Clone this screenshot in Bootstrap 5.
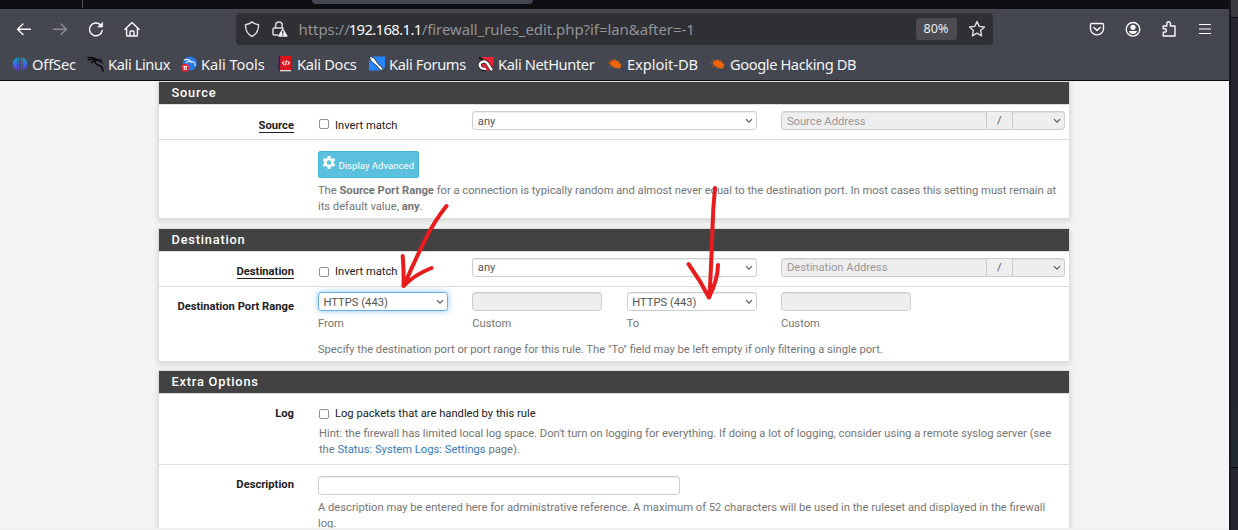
<!DOCTYPE html>
<html lang="en">
<head>
<meta charset="utf-8">
<meta name="viewport" content="width=device-width, initial-scale=1">
<title>Firewall: Rules: Edit</title>
<link rel="stylesheet" href="https://cdn.jsdelivr.net/npm/bootstrap@5.3.0/dist/css/bootstrap.min.css">
<style>
html,body{height:530px;overflow:hidden}
body{background:#f0f0f0;font:11.2px/16px Roboto,sans-serif;color:#212121}
.window{width:1229px;height:528px}
.desk{width:9px;height:530px;background:#25262d;border-left:2px solid #16181d}
.desk-a{height:18px;background:#3a3b40;border-bottom:1px solid #08090b}
.desk-b{height:450px;background:linear-gradient(#26252d,#26252d 78%,#222a33);border-bottom:1px solid #07080a}
.tabstrip{height:9px;background:#0e0f13}
.tab-sep{width:1px;height:8px;margin-left:82px;background:#55565b}
.tab-on{width:221px;height:4px;margin-left:229px;border-radius:0 0 4px 4px;background:#44474f}
.chrome{background:#44474f;color:#fbfbfe;height:72px;border-bottom:1px solid #0c0810;font-family:"Noto Sans","Open Sans",sans-serif}
.chrome svg{display:block;flex:none;overflow:visible}
.navrow{height:40px;padding-left:16px}
.urlbar{width:757px;height:32px;background:#2f3034;border-radius:4px;margin-left:96px;padding-left:8px}
.url{font-size:14.9px;letter-spacing:-.02px;margin-left:10px;color:#929397;white-space:nowrap}
.url b{font-weight:400;color:#fbfbfe;letter-spacing:-.65px;margin-left:-1px}
.zoom-pill{width:41px;height:22px;line-height:22px;border-radius:3px;background:#4b4b51;font-size:12.6px;text-align:center;color:#ededf0}
.marks{height:30px;padding-left:12px;font-size:14.67px;color:#f3f3f5}
.mark-item{white-space:nowrap;height:30px;flex:none}
.mark-item svg{margin-right:4px}
.w1{width:76px;letter-spacing:-.15px}.w2{width:93px;letter-spacing:-.4px}.w3{width:96px;letter-spacing:-.05px}.w4{width:92px;letter-spacing:-.3px}.w5{width:109px;letter-spacing:-.38px}.w6{width:129px;letter-spacing:-.4px}.w7{width:103px;letter-spacing:-.05px}.w8{width:160px;letter-spacing:-.41px}
.page{height:447px;background:#f4f4f4;overflow:hidden;padding-left:158px}
.panel{width:912px;background:#fff;border:1px solid #ddd;box-shadow:0 2px 5px 1px rgba(0,0,0,.10);margin-bottom:9px}
.panel-title{height:23px;background:#424242;color:#fff;border-bottom:1px solid #ddd;padding:0 0 0 12.5px;font-size:12.8px;line-height:22px;font-weight:500;letter-spacing:.8px;margin:0}
.frow{--bs-gutter-x:24px;margin:0 -8.6px 0 -7.4px;position:relative}
.line{border-bottom:1px solid #ddd}
.lbl{font-weight:700;text-align:right}
.lbl u{text-decoration:none;border-bottom:1px solid #212121;padding-bottom:0;display:inline-block;line-height:13px}
.form-control,.form-select{font:11.2px/16px Roboto,sans-serif;height:19px;min-height:0;padding:0 5px;border:1px solid #ccc;border-radius:3.2px;color:#555;box-shadow:inset 0 1px 1px rgba(0,0,0,.075)}
.form-select{padding-left:4.6px;background:#fff url("data:image/svg+xml,%3Csvg xmlns='http://www.w3.org/2000/svg' viewBox='0 0 8 6'%3E%3Cpath d='M1 1.2l3 3 3-3' fill='none' stroke='%23555' stroke-width='1.1'/%3E%3C/svg%3E") no-repeat right 3px center/8px 6px}
.nudge{padding-top:2px}
.form-control:disabled,.form-select:disabled{background-color:#eee;opacity:1}
.form-control::placeholder{color:#999}
.is-focus{border-color:#66afe9;box-shadow:0 0 6px rgba(102,175,233,.7)}
.cell4{width:130px}
.slash{width:25px;height:19px;background:#eee;border:solid #ccc;border-width:1px 0;text-align:center;line-height:18px;color:#555}
.addr{width:206px;border-radius:3.2px 0 0 3.2px}
.mask{width:53px;border-radius:0 3.2px 3.2px 0;border-left-width:1px}
.form-check-input{width:10px;height:10px;margin:0 6px 0 1px;border:1px solid #8f8f9d;border-radius:2px!important;float:none;flex:none}
.check-up{margin-top:-4px}
.help{color:#757575}
.help a{color:#337ab7;text-decoration:none}
.btn-adv{width:101px;height:27px;background:#5bc0de;border:1px solid #46b8da;border-radius:2px;color:#fff;font-size:9.6px;line-height:25px;padding:2px 0 0 3.5px}
.scribble{position:absolute;left:0;top:0;pointer-events:none}
</style>
</head>
<body>
<div class="d-flex">
<div class="window">
<div class="tabstrip d-flex"><span class="tab-sep"></span><span class="tab-on"></span></div>
<header class="chrome">
<div class="navrow d-flex align-items-center">
<svg width="16" height="16" fill="none" stroke="#fbfbfe" stroke-width="1.4" stroke-linecap="round" stroke-linejoin="round"><path d="M1.500 8.300h13M7 3L1.500 8.300 7 13.600"/></svg>
<svg width="16" height="16" style="margin-left:20px" fill="none" stroke="#8b8d92" stroke-width="1.4" stroke-linecap="round" stroke-linejoin="round"><path d="M1.500 8.300h13M9 3l5.500 5.300L9 13.600"/></svg>
<svg width="16" height="16" style="margin-left:20px" fill="none" stroke="#fbfbfe" stroke-width="1.4" stroke-linecap="round"><path d="M14.200 9.500A6.400 6.400 0 1 1 12.400 3.800"/><path d="M14.600 1.500v4.600H10z" fill="#fbfbfe" stroke-width=".6" stroke-linejoin="round"/></svg>
<svg width="16" height="16" style="margin-left:19.500px" fill="none" stroke="#fbfbfe" stroke-width="1.4" stroke-linecap="round" stroke-linejoin="round"><path d="M1 8.200L8 1.400l7 6.800M2.600 7v7.200q0 .8.8.8h9.200q.8 0 .8-.8V7M6 15v-4q0-1 1-1h2q1 0 1 1v4"/></svg>
<div class="urlbar d-flex align-items-center">
<svg width="16" height="16" fill="none" stroke="#dcdcdf" stroke-width="1.4" stroke-linejoin="round"><path d="M8 .9c2 1.700 4.200 2.500 6.600 2.800C14.500 8.700 13 13 8 15.500 3 13 1.500 8.700 1.400 3.700 3.800 3.400 6 2.600 8 .9z"/></svg>
<svg width="18" height="16" style="margin-left:11px" fill="none" stroke="#dcdcdf" stroke-width="1.5"><path d="M4.600 7V4.200a3.300 3.300 0 0 1 6.600 0V7M7 14H3.200q-1.200 0-1.200-1.200V8.200Q2 7 3.200 7h9.300"/><path d="M11.800 7.800l4.400 7.400H7.400z" fill="#f0f0f2" stroke="#f0f0f2" stroke-width="1" stroke-linejoin="round"/><path d="M11.800 9.800v2.900m0 .8v1.200" stroke="#2f3034" stroke-width="1.300"/></svg>
<span class="url">https://<b>192.168.1.1</b>/firewall_rules_edit.php?if=lan&amp;after=-1</span>
<span class="zoom-pill ms-auto">80%</span>
<svg width="18" height="18" style="margin:0 7px 0 11px" fill="none" stroke="#dcdcdf" stroke-width="1.400" stroke-linejoin="round"><path d="M9 1.500l2.200 4.900 5.300.6-3.900 3.600 1 5.200L9 13.200l-4.600 2.600 1-5.200L1.500 7l5.300-.6z"/></svg>
</div>
<svg width="16" height="16" style="margin-left:96px" fill="none" stroke="#fbfbfe" stroke-width="1.400" stroke-linecap="round" stroke-linejoin="round"><path d="M2.700 2.500h10.600q1.200 0 1.200 1.200v4a6.500 6.200 0 0 1-13 0v-4q0-1.200 1.200-1.200zM4.900 6.500L8 9.500l3.100-3"/></svg>
<svg width="16" height="16" style="margin-left:20.500px" fill="#fbfbfe"><circle cx="8" cy="8.300" r="6.800" fill="none" stroke="#fbfbfe" stroke-width="1.400"/><circle cx="8" cy="6.300" r="2.600"/><path d="M3.900 10h8.200c-.5 1.900-2 3-4.100 3s-3.600-1.100-4.100-3z"/></svg>
<svg width="16" height="16" style="margin-left:20px" fill="none" stroke="#fbfbfe" stroke-width="1.400" stroke-linejoin="round"><path d="M2.200 5h3.600V2.600a1.800 1.800 0 0 1 3.600 0V5H14v10H2.200v-3.700h1.500a1.700 1.700 0 0 0 0-3.500H2.200z"/></svg>
<svg width="16" height="16" style="margin-left:20px" stroke="#fbfbfe" stroke-width="1.200"><path d="M2 3.500h12M2 8h12M2 12.500h12"/></svg>
</div>
<nav class="marks d-flex">
<div class="mark-item w1 d-flex align-items-center"><svg width="16" height="16"><defs><linearGradient id="g" x2="0" y2="1"><stop stop-color="#10a8c8"/><stop offset="1" stop-color="#6a2ae8"/></linearGradient></defs><path d="M5.300 1.500Q.6 3.500.6 8t4.700 6zM6.200 1.300h1v14.200Q6.200 15 6.200 13zM10.700 1.500q4.700 2 4.700 6.500t-4.700 6zM9.800 1.300h-1v14.200Q9.800 15 9.800 13z" fill="url(#g)"/></svg><span>OffSec</span></div>
<div class="mark-item w2 d-flex align-items-center"><svg width="16" height="16" fill="none" stroke="#050506" stroke-linecap="round"><path d="M0 1.800Q5 .5 10 4M.5 4q4-1.500 7.500.5M3.500 6.500Q6 4 9 4.200l4.500 1.300M6.800 5.500C7 9 10 8.600 12.700 10.200q1.800 1.200 2.300 5" stroke-width="1.400"/><path d="M11 4.200l2-.8M13 6l1.800 1.500" stroke-width="1"/></svg><span>Kali Linux</span></div>
<div class="mark-item w3 d-flex align-items-center"><svg width="16" height="16"><circle cx="9" cy="7.500" r="7" fill="#2878e8"/><path d="M3 4q5-2 7.500 2 4-1 3.500 4M5 7q3-3 5.500-.500" fill="none" stroke="#e7f2ff" stroke-width="1.100"/><circle cx="4.200" cy="11.800" r="4" fill="#e62532"/><path d="M2.200 10.500h4M3.300 10.500v3.500M5.200 10.500v3.500" stroke="#fff"/></svg><span>Kali Tools</span></div>
<div class="mark-item w4 d-flex align-items-center"><svg width="16" height="16"><path d="M2 0h12v15H2z" fill="#e0131b"/><path d="M1.500 0h1.700v15H1.500z" fill="#30205a"/><path d="M3 14h11v1.300H3z" fill="#ddd"/><path d="M7.300 5L5.500 7l1.800 2M10.500 5l1.800 2-1.800 2M9.500 4.500l-1.300 5" fill="none" stroke="#fff" stroke-width="1.100"/></svg><span>Kali Docs</span></div>
<div class="mark-item w5 d-flex align-items-center"><svg width="16" height="16"><path d="M2 .5h14v9.500l-1.500 4.500H0V4.500z" fill="#2487ff"/><path d="M0 0l5 2 5 7 2 1 3 5.500-5-2.500-1.500-2.500L2 5z" fill="#fff" stroke="#1b1b22" stroke-width=".8"/></svg><span>Kali Forums</span></div>
<div class="mark-item w6 d-flex align-items-center"><svg width="16" height="16"><path d="M3 1h13l-2 13.500H5z" fill="#ed2338"/><path d="M1 1.500l4 2" stroke="#111" stroke-width="1.500"/><path d="M8 13.500C-.5 13 .5 5.500 6 5.500c4.500 0 4 5 8 8.500" fill="none" stroke="#18181c" stroke-width="3.800"/><path d="M8 13C-.5 13 .5 5.500 6 5.500c4.500 0 4 5 8 8.500" fill="none" stroke="#fff" stroke-width="2.500"/></svg><span>Kali NetHunter</span></div>
<div class="mark-item w7 d-flex align-items-center"><svg width="16" height="16"><path d="M3 6l2-1.500 3-.5 4 2 2 3.500-.5 2-2.500 1-4-1L3.500 8.500z" fill="#f3650b"/><path d="M2 3l2.500 2.500M7 2.500L8 5M11 4l-.5 2.500M.5 7H4M2 11l3-1.500M13 8.500l2.500-.500M12 11l.5 2" stroke="#d65d18" stroke-width=".7"/></svg><span>Exploit-DB</span></div>
<div class="mark-item w8 d-flex align-items-center"><svg width="16" height="16"><path d="M3 6l2-1.500 3-.5 4 2 2 3.500-.5 2-2.500 1-4-1L3.500 8.500z" fill="#f3650b"/><path d="M2 3l2.500 2.500M7 2.500L8 5M11 4l-.5 2.500M.5 7H4M2 11l3-1.500M13 8.500l2.500-.500M12 11l.5 2" stroke="#d65d18" stroke-width=".7"/></svg><span>Google Hacking DB</span></div>
</nav>
</header>
<main class="page">
<section class="panel">
<h2 class="panel-title">Source</h2>
<div class="line" style="height:35px"><div class="row frow">
<div class="col-2 lbl" style="padding-top:13px"><u>Source</u></div>
<div class="col-2 d-flex align-items-center pt-1" style="height:37px"><input class="form-check-input check-up" type="checkbox" id="si"><label for="si">Invert match</label></div>
<div class="col-4" style="padding-top:6px"><select class="form-select nudge"><option>any</option></select></div>
<div class="col-4 d-flex" style="padding-top:6px"><input class="form-control addr nudge" placeholder="Source Address" disabled><span class="slash">/</span><select class="form-select mask" disabled aria-label="mask"></select></div>
</div></div>
<div style="height:78px"><div class="row frow"><div class="col-10 offset-2" style="padding-top:11px">
<button class="btn btn-adv d-flex align-items-center"><svg width="14" height="14" viewBox="0 0 14 14" style="margin:-5px 2px 0 0"><path fill-rule="evenodd" fill="#fff" d="M5.700 0h2.600l.4 1.900 1.400.8 1.900-.7 1.300 2.300-1.500 1.300v1.600l1.500 1.300-1.300 2.300-1.900-.7-1.400.8-.4 2.100H5.700l-.4-2.100-1.400-.8-1.900.7L.7 8.500l1.500-1.300V5.600L.7 4.300 2 2l1.900.7 1.400-.8zM7 4.200a2.300 2.300 0 1 0 0 4.600 2.300 2.300 0 0 0 0-4.600z"/></svg>Display Advanced</button>
<div class="help" style="padding-top:5px">The <b>Source Port Range</b> for a connection is typically random and almost never equal to the destination port. In most cases this setting must remain at<br>its default value, <b>any</b>.</div>
</div></div></div>
</section>
<section class="panel" style="margin-bottom:8px">
<h2 class="panel-title">Destination</h2>
<div class="line" style="height:35px"><div class="row frow">
<div class="col-2 lbl" style="padding-top:12px"><u>Destination</u></div>
<div class="col-2 d-flex align-items-center pt-1" style="height:36px"><input class="form-check-input" type="checkbox" id="di"><label for="di">Invert match</label></div>
<div class="col-4" style="padding-top:6px"><select class="form-select"><option>any</option></select></div>
<div class="col-4 d-flex" style="padding-top:6px"><input class="form-control addr" placeholder="Destination Address" disabled><span class="slash">/</span><select class="form-select mask" disabled aria-label="mask"></select></div>
</div></div>
<div style="height:74px"><div class="row frow" style="padding-top:5px">
<div class="col-2 lbl" style="padding-top:7px">Destination Port Range</div>
<div class="col-2 help"><select class="form-select cell4 is-focus nudge"><option>HTTPS (443)</option></select><div style="padding-top:5px">From</div></div>
<div class="col-2 help"><input class="form-control cell4" disabled><div style="padding-top:5px">Custom</div></div>
<div class="col-2 help"><select class="form-select cell4 nudge"><option>HTTPS (443)</option></select><div style="padding-top:5px">To</div></div>
<div class="col-2 help"><input class="form-control cell4" disabled><div style="padding-top:5px">Custom</div></div>
<div class="col-10 offset-2 help" style="padding-top:10px">Specify the destination port or port range for this rule. The "To" field may be left empty if only filtering a single port.</div>
</div></div>
</section>
<section class="panel">
<h2 class="panel-title">Extra Options</h2>
<div class="line" style="height:71px"><div class="row frow">
<div class="col-2 lbl" style="padding-top:12px">Log</div>
<div class="col-10" style="padding-top:12px"><div class="d-flex align-items-center"><input class="form-check-input" type="checkbox" id="lg"><label for="lg">Log packets that are handled by this rule</label></div>
<div class="help" style="padding:4px 0 0 1px">Hint: the firewall has limited local log space. Don't turn on logging for everything. If doing a lot of logging, consider using a remote syslog server (see<br>the <a href="#">Status: System Logs: Settings</a> page).</div></div>
</div></div>
<div style="height:80px"><div class="row frow">
<div class="col-2 lbl" style="padding-top:12px">Description</div>
<div class="col-10" style="padding-top:11px"><input class="form-control" style="width:362px" aria-label="Description">
<div class="help" style="padding-top:5px">A description may be entered here for administrative reference. A maximum of 52 characters will be used in the ruleset and displayed in the firewall<br>log.</div></div>
</div></div>
</section>
</main>
</div>
<aside class="desk"><div class="desk-a"></div><div class="desk-b"></div></aside>
</div>
<svg class="scribble" width="1238" height="530" fill="none" stroke="#e81c1c" stroke-width="4" stroke-linecap="round" stroke-linejoin="round"><path d="M446.500 206Q435 220 425 240T404 285.500M402.700 256Q404 271 403.500 286 414 275 431.500 268"/><path d="M715 188Q713 208 712.500 228T709.500 297M688.500 264Q700 280 709 297.500 718 279 718 265"/></svg>
<script src="https://cdn.jsdelivr.net/npm/bootstrap@5.3.0/dist/js/bootstrap.bundle.min.js"></script>
</body>
</html>
